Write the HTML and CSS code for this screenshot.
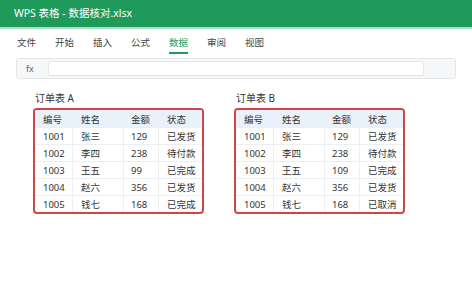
FILE: index.html
```html
<!DOCTYPE html>
<html lang="zh-CN">
<head>
  <meta charset="UTF-8">
  <title>WPS 表格 - 数据核对.xlsx</title>
  <link rel="stylesheet" href="styles.css">
</head>
<body>

  <!-- Title bar -->
  <div class="titlebar">WPS 表格 - 数据核对.xlsx</div>

  <!-- Ribbon tabs -->
  <div class="tabs">
    <span class="tab">文件</span>
    <span class="tab">开始</span>
    <span class="tab">插入</span>
    <span class="tab">公式</span>
    <span class="tab active">数据</span>
    <span class="tab">审阅</span>
    <span class="tab">视图</span>
  </div>

  <!-- Formula bar -->
  <div class="formula-bar">
    <span class="fx">fx</span>
    <div class="formula-input"></div>
  </div>

  <!-- Sheets -->
  <div class="sheets">
    <div class="sheet">
      <div class="sheet-title">订单表 A</div>
      <table class="orders">
        <colgroup><col class="c-id"><col class="c-name"><col class="c-amount"><col class="c-status"></colgroup>
        <tr><th>编号</th><th>姓名</th><th>金额</th><th>状态</th></tr>
        <tr><td>1001</td><td>张三</td><td>129</td><td>已发货</td></tr>
        <tr><td>1002</td><td>李四</td><td>238</td><td>待付款</td></tr>
        <tr><td>1003</td><td>王五</td><td>99</td><td>已完成</td></tr>
        <tr><td>1004</td><td>赵六</td><td>356</td><td>已发货</td></tr>
        <tr><td>1005</td><td>钱七</td><td>168</td><td>已完成</td></tr>
      </table>
    </div>

    <div class="sheet">
      <div class="sheet-title">订单表 B</div>
      <table class="orders">
        <colgroup><col class="c-id"><col class="c-name"><col class="c-amount"><col class="c-status"></colgroup>
        <tr><th>编号</th><th>姓名</th><th>金额</th><th>状态</th></tr>
        <tr><td>1001</td><td>张三</td><td>129</td><td>已发货</td></tr>
        <tr><td>1002</td><td>李四</td><td>238</td><td>待付款</td></tr>
        <tr><td>1003</td><td>王五</td><td>109</td><td>已完成</td></tr>
        <tr><td>1004</td><td>赵六</td><td>356</td><td>已发货</td></tr>
        <tr><td>1005</td><td>钱七</td><td>168</td><td>已取消</td></tr>
      </table>
    </div>
  </div>

</body>
</html>
```

FILE: styles.css
```css
body {
  margin: 0;
  background: #fff;
  font-family: "Noto Sans", "Noto Sans CJK SC", sans-serif;
  color: #333;
}
.titlebar {
  height: 27px;
  line-height: 27px;
  padding-left: 14px;
  background: #1f9a5b;
  color: #fff;
  font-size: 10.5px;
  border-bottom: 2px solid #a9dcc1;
}
.tabs {
  display: flex;
  gap: 19px;
  padding: 7px 0 0 17px;
  height: 22px;
  box-sizing: content-box;
}
.tab {
  font-size: 9.5px;
  line-height: 14px;
  height: 16px;
  color: #444;
  border-bottom: 2px solid transparent;
}
.tab.active {
  color: #1f9a5b;
  border-bottom-color: #1f9a5b;
}
.formula-bar {
  display: flex;
  align-items: center;
  margin: 0 16px;
  height: 21px;
  box-sizing: border-box;
  padding: 0 31px 0 9px;
  background: #f6f7f9;
  border: 1px solid #e3e5e8;
  border-radius: 3px;
}
.fx {
  width: 22px;
  font-size: 9px;
  color: #666;
}
.formula-input {
  flex: 1;
  height: 15px;
  background: #fff;
  border: 1px solid #e3e5e8;
  border-radius: 2px;
  box-sizing: border-box;
}
.sheets {
  display: flex;
  gap: 30px;
  padding: 13px 0 0 33px;
}
.sheet-title {
  font-size: 10px;
  line-height: 12px;
  padding-left: 2px;
  margin-bottom: 4px;
}
.orders {
  width: 171px;
  table-layout: fixed;
  border-collapse: separate;
  border-spacing: 0;
  border: 2px solid #cf4646;
  border-radius: 4px;
  font-size: 9.5px;
  overflow: hidden;
}
.c-id { width: 37px; }
.c-name { width: 51px; }
.c-amount { width: 35px; }
.c-status { width: 44px; }
.orders th,
.orders td {
  height: 17px;
  padding: 0 0 0 8px;
  text-align: left;
  font-weight: normal;
  white-space: nowrap;
  border-top: 1px solid #eceef1;
  border-left: 1px solid #eceef1;
  box-sizing: border-box;
}
.orders th {
  border-top: none;
  background: #e9f1fb;
}
.orders th:first-child,
.orders td:first-child {
  border-left: none;
}
.orders th:nth-child(3),
.orders td:nth-child(3) {
  padding-left: 7px;
}
```
